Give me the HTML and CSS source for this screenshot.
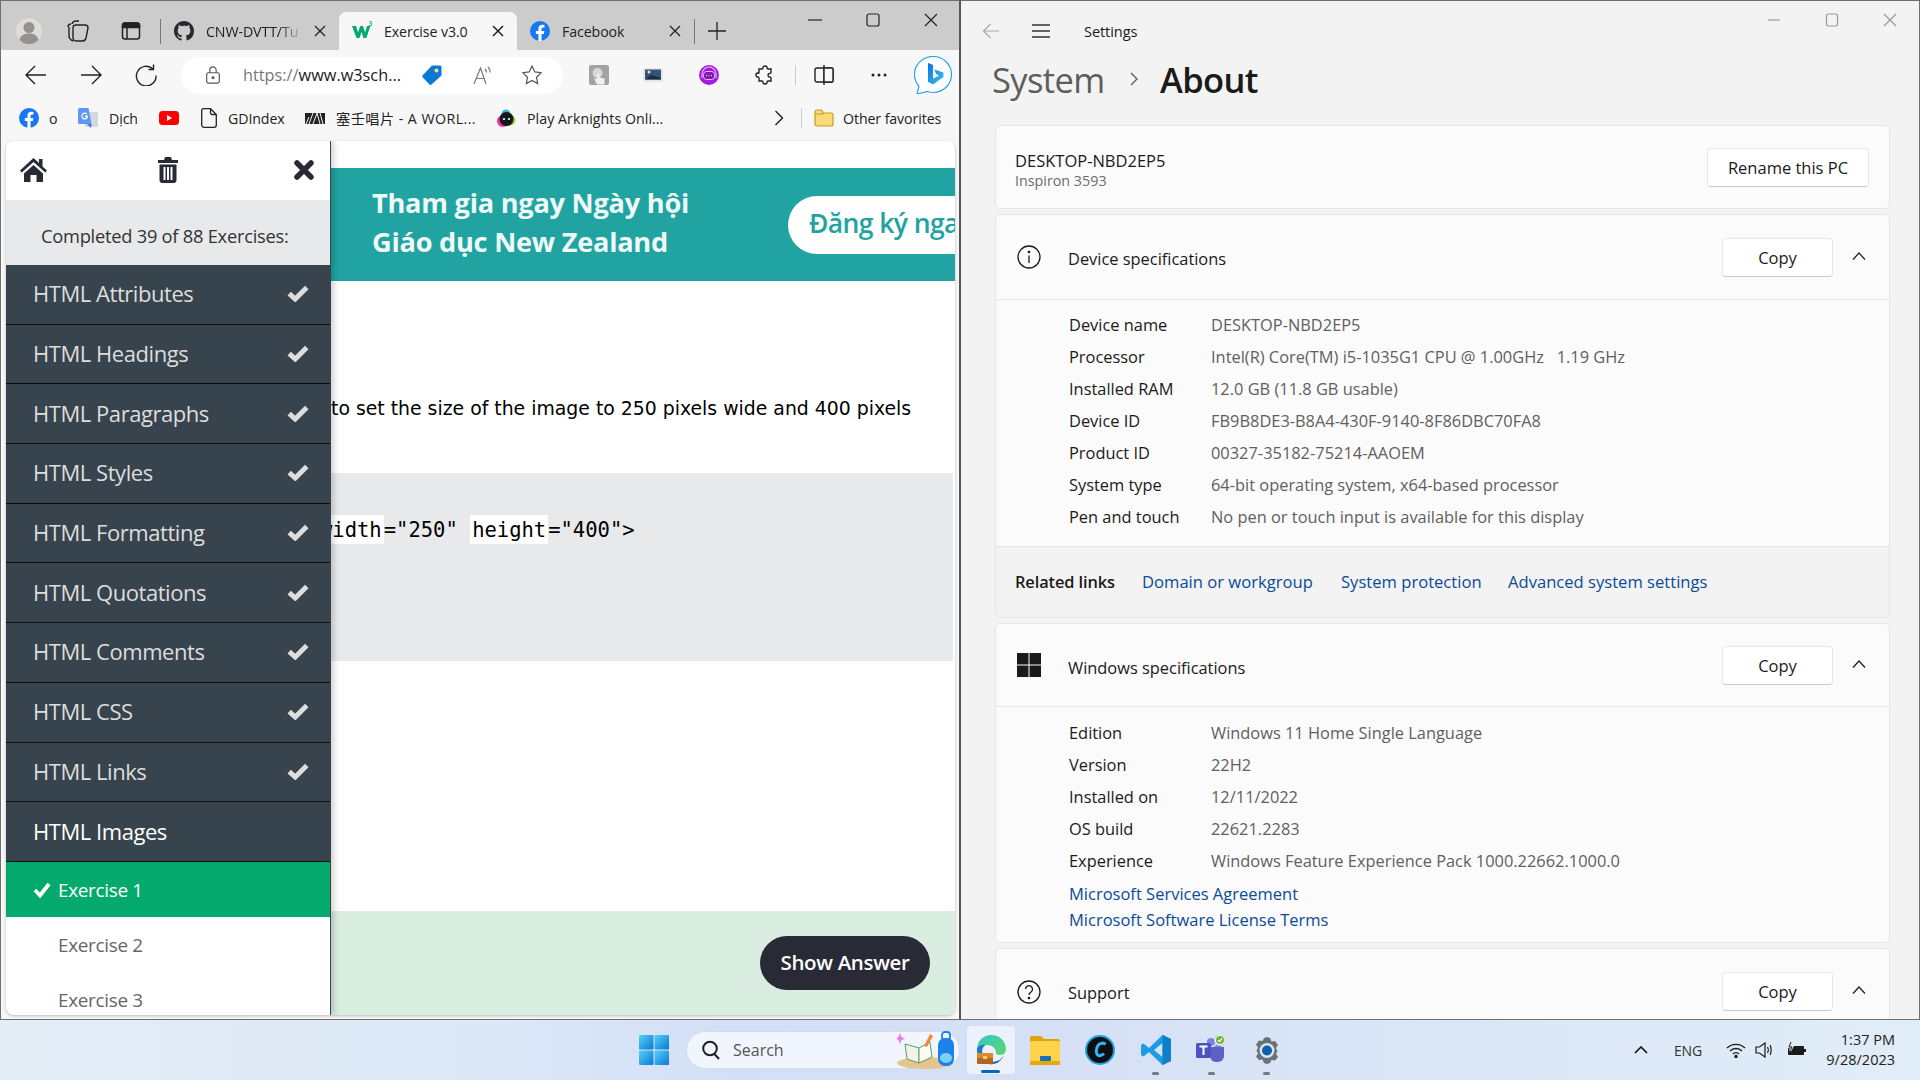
FILE: index.html
```html
<!DOCTYPE html>
<html lang="en">
<head>
<meta charset="utf-8">
<title>Desktop</title>
<link rel="stylesheet" href="styles.css">
</head>
<body>
<div class="desktop">
  <div class="windows">
    <section class="browser">
      <div class="tabstrip">
        <svg class="i26 m16" viewBox="0 0 26 26"><circle cx="13" cy="13" r="13" fill="#dedcd8"/><circle cx="13" cy="9.5" r="5.5" fill="#96918c"/><path d="M3.5 22c1-5 5-6.5 9.500-6.500s8.500 1.500 9.500 6.500a13 13 0 0 1-19 0z" fill="#96918c"/></svg>
        <svg class="i22 m25" viewBox="0 0 22 22" fill="none" stroke="#222" stroke-width="1.400"><path d="M1 7c0-2 1-3 3-3M5 4c.5-2 2-3 4-3h3"/><path d="M2 7v9c0 2 2 4 4 5"/><path d="M6 8c0-2 1-3 3-3h9c2 0 3 1 3 3l-2 10c-.5 2-1.500 3-3.500 3H10c-2 0-4-1-4-3z"/></svg>
        <svg class="i20 m32" viewBox="0 0 20 20" fill="none" stroke="#222" stroke-width="1.500"><rect x="1.500" y="2" width="17" height="16" rx="2.500"/><path d="M6 7v11M1.500 6.500h17"/><path d="M1.500 6V4.500a2.500 2.500 0 0 1 2.500-2.500h12a2.500 2.500 0 0 1 2.500 2.500V6z" fill="#222"/></svg>
        <span class="sep-tab m19"></span>
        <div class="tab">
          <svg class="i20" viewBox="0 0 16 16"><path fill="#24292f" d="M8 0C3.580 0 0 3.580 0 8c0 3.540 2.290 6.530 5.470 7.590.4.070.55-.17.55-.38v-1.340c-2.230.48-2.690-1.070-2.690-1.070-.36-.92-.89-1.170-.89-1.170-.73-.5.050-.49.050-.49.800.06 1.230.83 1.230.83.720 1.220 1.870.87 2.330.66.070-.52.280-.87.510-1.070-1.780-.2-3.640-.89-3.640-3.950 0-.87.310-1.590.820-2.150-.08-.2-.36-1.020.08-2.120 0 0 .67-.21 2.200.82A7.600 7.600 0 0 1 8 3.870c.68 0 1.360.09 2 .27 1.530-1.040 2.200-.82 2.200-.82.44 1.100.16 1.920.08 2.120.51.560.82 1.270.82 2.150 0 3.070-1.870 3.750-3.650 3.950.29.250.54.730.54 1.480v2.200c0 .21.150.46.55.38A8 8 0 0 0 16 8c0-4.420-3.580-8-8-8z"/></svg>
          <span class="tab-title fade">CNW-DVTT/Tu</span>
          <svg class="i12 close" viewBox="0 0 12 12"><path d="M1 1l10 10M11 1L1 11" stroke="#222" stroke-width="1.300"/></svg>
        </div>
        <div class="tab active">
          <svg class="i20 w3" viewBox="0 0 20 20"><path fill="#04aa6d" d="M0 5h4l2 6.500L8.300 5h2.600l2.300 6.500L15 5h3.400l-4 12h-3L9.600 11 7.500 17h-3z"/><text x="16.500" y="4.500" class="sup">3</text></svg>
          <span class="tab-title">Exercise v3.0</span>
          <svg class="i12 close" viewBox="0 0 12 12"><path d="M1 1l10 10M11 1L1 11" stroke="#111" stroke-width="1.400"/></svg>
        </div>
        <div class="tab last">
          <svg class="i20" viewBox="0 0 20 20"><circle cx="10" cy="10" r="10" fill="#1877f2"/><path fill="#fff" d="M13.900 12.900l.45-2.900h-2.800V8.100c0-.8.4-1.600 1.650-1.600h1.250V4.050s-1.150-.2-2.250-.2c-2.300 0-3.800 1.400-3.800 3.900V10H5.850v2.900H8.400V20h3.150v-7.100z"/></svg>
          <span class="tab-title">Facebook</span>
          <svg class="i12 close" viewBox="0 0 12 12"><path d="M1 1l10 10M11 1L1 11" stroke="#222" stroke-width="1.300"/></svg>
        </div>
        <span class="sep-tab"></span>
        <svg class="i18 m13" viewBox="0 0 18 18"><path d="M9 0v18M0 9h18" stroke="#222" stroke-width="1.300"/></svg>
        <div class="winctl">
          <span class="ctl"><svg class="i14" viewBox="0 0 14 14"><path d="M0 7h14" stroke="#222" stroke-width="1.200"/></svg></span>
          <span class="ctl"><svg class="i14" viewBox="0 0 14 14"><rect x="1" y="1" width="12" height="12" rx="2" fill="none" stroke="#222" stroke-width="1.200"/></svg></span>
          <span class="ctl"><svg class="i14" viewBox="0 0 14 14"><path d="M1 1l12 12M13 1L1 13" stroke="#222" stroke-width="1.200"/></svg></span>
        </div>
      </div>

      <div class="toolbar">
        <svg class="i22 t-back" viewBox="0 0 22 22" fill="none" stroke="#222" stroke-width="1.400"><path d="M21 11H1.500M10 2l-9 9 9 9"/></svg>
        <svg class="i22 t-next" viewBox="0 0 22 22" fill="none" stroke="#222" stroke-width="1.400"><path d="M1 11h19.500M12 2l9 9-9 9"/></svg>
        <svg class="i22 t-next" viewBox="0 0 22 22" fill="none" stroke="#222" stroke-width="1.400"><path d="M18 5a9.800 9.800 0 1 0 3 6.500"/><path d="M18.500 .5V5.500H13.500"/></svg>
        <div class="addr">
          <svg class="i18" viewBox="0 0 18 20" fill="none" stroke="#555" stroke-width="1.300"><rect x="2" y="7.500" width="14" height="11.500" rx="2"/><path d="M5.500 7.500V4.500a3.500 3.500 0 0 1 7 0v3"/><circle cx="9" cy="13" r="1" fill="#555"/></svg>
          <span class="url"><span class="url-dim">https://</span>www.w3sch...</span>
          <svg class="i20 a-tag" viewBox="0 0 20 20"><path fill="#0a78d4" d="M10 .5h8a1.500 1.500 0 0 1 1.500 1.500v8.500L9.500 19.500a1.500 1.500 0 0 1-2 0L.7 12.300a1.500 1.500 0 0 1 0-2z"/><circle cx="14.500" cy="5.500" r="2" fill="#f7e27c"/></svg>
          <svg class="i20 a-read" viewBox="0 0 20 20" fill="none" stroke="#777" stroke-width="1.200"><path d="M1 19L7.500 3 13 19M3.500 13.500h8"/><path d="M12 4c1 1 1.500 2 1.500 3.500M15 2c1.500 1.500 2.200 3 2.200 5.500"/></svg>
          <svg class="i20 a-star" viewBox="0 0 20 20" fill="none" stroke="#555" stroke-width="1.200"><path d="M10 1l2.800 5.900 6.400.8-4.700 4.500 1.200 6.400L10 15.500l-5.700 3.100 1.200-6.400L.8 7.700l6.400-.8z"/></svg>
        </div>
        <svg class="i20 e-1" viewBox="0 0 20 20"><rect width="20" height="20" rx="2" fill="#a3a3a3"/><circle cx="8.500" cy="8" r="5" fill="#d8d8d8"/><path d="M8 8.500h2.500v4l5 1v6H8l-3-6h3z" fill="#eef0f2"/></svg>
        <svg class="i20 e-2" viewBox="0 0 20 20"><rect y="3" width="20" height="14" fill="#e4e6ea"/><rect x="2" y="4.500" width="16" height="10" fill="#36537a"/><circle cx="6" cy="7" r="1.500" fill="#ffe08a"/><path d="M2 14.500L8 10l10 3v1.500z" fill="#1d2c44"/></svg>
        <svg class="i20 e-3" viewBox="0 0 20 20"><circle cx="10" cy="10" r="10" fill="#a21ce0"/><path d="M3 13V9a7 7 0 0 1 14 0v4" fill="none" stroke="#e6c0f8" stroke-width="1.100"/><rect x="4.500" y="6.500" width="11" height="8" rx="3" fill="#7c14ad" stroke="#e6c0f8" stroke-width="1"/><path d="M7 10.500h1M9.500 10.500h1M12 10.500h1" stroke="#e6c0f8" stroke-width="1.500"/></svg>
        <svg class="i20 e-4" viewBox="0 0 20 20" fill="none" stroke="#222" stroke-width="1.400"><path d="M8 2.500c0-2 4-2 4 0 0 1 0 1.500 1 1.500h3v3.500c0 1-1 1-1.500 1-2 0-2 3.500 0 3.500.5 0 1.500 0 1.500 1V16h-3c-1 0-1 .5-1 1.500 0 2-4 2-4 0 0-1 0-1.500-1-1.500H4v-3c0-1-.5-1-1.500-1-2 0-2-4 0-4C3.500 8.500 4 8.500 4 7.500V4h3c1 0 1-.5 1-1.500z"/></svg>
        <span class="sep-bar e-5"></span>
        <svg class="i20 e-6" viewBox="0 0 20 20" fill="none" stroke="#222" stroke-width="1.400"><rect x="1" y="3" width="18" height="14" rx="2"/><path d="M10 0v20" /><path d="M10 3h8a1 1 0 0 1 1 1v12a1 1 0 0 1-1 1h-8z" fill="#f7f7f7"/></svg>
        <svg class="i20 e-7" viewBox="0 0 20 20"><circle cx="4" cy="10" r="1.500" fill="#222"/><circle cx="10" cy="10" r="1.500" fill="#222"/><circle cx="16" cy="10" r="1.500" fill="#222"/></svg>
        <svg class="bing" viewBox="0 0 38 38"><defs><linearGradient id="bg" x1="0" y1="0" x2="1" y2="1"><stop offset="0" stop-color="#0f6fe0"/><stop offset="1" stop-color="#35c6f0"/></linearGradient></defs><path d="M19 .5a18.500 18 0 0 1 0 36c-2 0-4-.4-5.500-1L3 38l2-7.500A18 18 0 0 1 19 .5z" fill="#fff" stroke="#29a3e8" stroke-width="1.200"/><path d="M14 7l5 1.800v14l6-3.400-2.800-1.400-1.800-4.500 9 3.100v4.300L19 28.500l-5-2.800z" fill="url(#bg)"/></svg>
      </div>

      <div class="bookmarks">
        <svg class="i20 b-1" viewBox="0 0 20 20"><circle cx="10" cy="10" r="10" fill="#1877f2"/><path fill="#fff" d="M13.900 12.900l.45-2.900h-2.800V8.100c0-.8.4-1.600 1.650-1.600h1.250V4.050s-1.150-.2-2.250-.2c-2.300 0-3.800 1.400-3.800 3.900V10H5.850v2.900H8.400V20h3.150v-7.100z"/></svg>
        <span class="bm b-t1">o</span>
        <svg class="i20 b-2" viewBox="0 0 20 20"><rect x="7" y="4" width="13" height="15" rx="1" fill="#d4d7dc"/><path d="M0 1.500A1.500 1.500 0 0 1 1.500 0h9l3 16H1.500A1.500 1.500 0 0 1 0 14.500z" fill="#5e97f6"/><path d="M9 16l4 4 .5-4z" fill="#3b78e7"/><path d="M10 7.500H7v1.500h1.500c-.3 1-1 1.300-1.700 1.300a2.300 2.300 0 1 1 1.500-4L9.300 5.300a3.600 3.600 0 1 0-2.500 6.300c2.300 0 3.500-1.800 3.200-4.100z" fill="#fff"/></svg>
        <span class="bm b-t2">Dịch</span>
        <svg class="yt b-3" viewBox="0 0 20 14"><rect width="20" height="14" rx="3.500" fill="#f00"/><path d="M8 4l5 3-5 3z" fill="#fff"/></svg>
        <svg class="doc b-4" viewBox="0 0 16 20" fill="none" stroke="#222" stroke-width="1.300"><path d="M2.500 .7h7l5.800 5.800V17a2.300 2.300 0 0 1-2.300 2.300H3A2.300 2.300 0 0 1 .7 17V2.500A1.800 1.800 0 0 1 2.500 .7z"/><path d="M9.500 .7v4.300a1.500 1.500 0 0 0 1.500 1.500h4.300"/></svg>
        <span class="bm b-t4">GDIndex</span>
        <svg class="aw b-5" viewBox="0 0 20 11"><rect width="20" height="11" fill="#222"/><path d="M4 11l4-11M8 11l4-11M12 0l3 11M15 0l3 11M1 11L4 4" stroke="#f7f7f7" stroke-width="1"/></svg>
        <span class="bm b-t5">塞壬唱片 - A WORL...</span>
        <svg class="i20 b-6" viewBox="0 0 20 20"><circle cx="7" cy="13" r="6" fill="#f02fa0"/><circle cx="14" cy="12" r="5.500" fill="#a5d63a"/><circle cx="10" cy="6" r="4.500" fill="#33b7d8"/><circle cx="10.500" cy="11" r="7" fill="#16161d"/><circle cx="8" cy="11" r="1.100" fill="#fff"/><circle cx="13" cy="11" r="1.100" fill="#fff"/></svg>
        <span class="bm b-t6">Play Arknights Onli...</span>
        <svg class="chev" viewBox="0 0 10 16" fill="none" stroke="#222" stroke-width="1.400"><path d="M1.500 1l7 7-7 7"/></svg>
        <span class="sep-bar b-sep"></span>
        <svg class="i20 b-f" viewBox="0 0 20 20"><path d="M1 4a2 2 0 0 1 2-2h4.500l2 3H17a2 2 0 0 1 2 2v9a2 2 0 0 1-2 2H3a2 2 0 0 1-2-2z" fill="#fbd977" stroke="#c59b29" stroke-width="1.200"/><path d="M1 6h7l2-1" fill="none" stroke="#c59b29" stroke-width="1.200"/></svg>
        <span class="bm b-t7">Other favorites</span>
      </div>

      <div class="page">
        <aside class="sidebar">
          <div class="side-head">
            <svg class="home" viewBox="0 0 27 25"><path fill="#282a35" d="M13.500 1L0 13.500l1.800 2L13.500 5l11.700 10.500 1.800-2-4.500-4V2h-3.500v4zM4 16.500V25h6.500v-7h6v7H23v-8.500L13.500 8z"/></svg>
            <svg class="trash" viewBox="0 0 20 26"><path fill="#282a35" d="M7 0h6l1 3h6v3H0V3h6zM1.500 7.500h17V23a3 3 0 0 1-3 3h-11a3 3 0 0 1-3-3zM5.500 10v13h2V10zM9 10v13h2V10zM12.500 10v13h2V10z" fill-rule="evenodd"/></svg>
            <svg class="xmark" viewBox="0 0 20 20"><path d="M3 3l14 14M17 3L3 17" stroke="#282a35" stroke-width="5.500" stroke-linecap="round"/></svg>
          </div>
          <div class="side-count">Completed 39 of 88 Exercises:</div>
          <div class="side-item"><span>HTML Attributes</span><svg class="check" viewBox="0 0 20 16"><path d="M2 8.500l5.500 5L18 3" fill="none" stroke="#ddd" stroke-width="4.500"/></svg></div>
          <div class="side-item"><span>HTML Headings</span><svg class="check" viewBox="0 0 20 16"><path d="M2 8.500l5.500 5L18 3" fill="none" stroke="#ddd" stroke-width="4.500"/></svg></div>
          <div class="side-item"><span>HTML Paragraphs</span><svg class="check" viewBox="0 0 20 16"><path d="M2 8.500l5.500 5L18 3" fill="none" stroke="#ddd" stroke-width="4.500"/></svg></div>
          <div class="side-item"><span>HTML Styles</span><svg class="check" viewBox="0 0 20 16"><path d="M2 8.500l5.500 5L18 3" fill="none" stroke="#ddd" stroke-width="4.500"/></svg></div>
          <div class="side-item"><span>HTML Formatting</span><svg class="check" viewBox="0 0 20 16"><path d="M2 8.500l5.500 5L18 3" fill="none" stroke="#ddd" stroke-width="4.500"/></svg></div>
          <div class="side-item"><span>HTML Quotations</span><svg class="check" viewBox="0 0 20 16"><path d="M2 8.500l5.500 5L18 3" fill="none" stroke="#ddd" stroke-width="4.500"/></svg></div>
          <div class="side-item"><span>HTML Comments</span><svg class="check" viewBox="0 0 20 16"><path d="M2 8.500l5.500 5L18 3" fill="none" stroke="#ddd" stroke-width="4.500"/></svg></div>
          <div class="side-item"><span>HTML CSS</span><svg class="check" viewBox="0 0 20 16"><path d="M2 8.500l5.500 5L18 3" fill="none" stroke="#ddd" stroke-width="4.500"/></svg></div>
          <div class="side-item"><span>HTML Links</span><svg class="check" viewBox="0 0 20 16"><path d="M2 8.500l5.500 5L18 3" fill="none" stroke="#ddd" stroke-width="4.500"/></svg></div>
          <div class="side-item current"><span>HTML Images</span></div>
          <div class="ex done"><svg class="check-sm" viewBox="0 0 18 16"><path d="M2 8l5 5.500L16 2" fill="none" stroke="#fff" stroke-width="3.800"/></svg><span>Exercise 1</span></div>
          <div class="ex"><span>Exercise 2</span></div>
          <div class="ex"><span>Exercise 3</span></div>
        </aside>
        <main class="main">
          <div class="banner">
            <div class="banner-text">Tham gia ngay Ngày hội<br>Giáo dục New Zealand</div>
            <div class="banner-pill">Đăng ký nga</div>
          </div>
          <p class="task">to set the size of the image to 250 pixels wide and 400 pixels</p>
          <div class="codebox"><div class="codeline"><span class="blank">width</span>="250" <span class="blank">height</span>="400"&gt;</div></div>
          <div class="answer"><span class="answer-btn">Show Answer</span></div>
        </main>
      </div>
    </section>

    <section class="settings">
      <div class="set-title">
        <svg class="i18 s-back" viewBox="0 0 18 18" fill="none" stroke="#a8a8a8" stroke-width="1.200"><path d="M17 9H1.500M8.500 2l-7 7 7 7"/></svg>
        <svg class="i18 s-menu" viewBox="0 0 18 18" stroke="#333" stroke-width="1.400"><path d="M0 3h18M0 9h18M0 15h18"/></svg>
        <span class="s-name">Settings</span>
        <div class="winctl light">
          <span class="ctl"><svg class="i14" viewBox="0 0 14 14"><path d="M1 7h12" stroke="#999" stroke-width="1.200"/></svg></span>
          <span class="ctl"><svg class="i14" viewBox="0 0 14 14"><rect x="1.500" y="1" width="11" height="12" rx="1.500" fill="none" stroke="#999" stroke-width="1.200"/></svg></span>
          <span class="ctl"><svg class="i14" viewBox="0 0 14 14"><path d="M1 1l12 12M13 1L1 13" stroke="#999" stroke-width="1.200"/></svg></span>
        </div>
      </div>
      <div class="crumbs">
        <span class="crumb-sys">System</span>
        <svg class="crumb-sep" viewBox="0 0 10 14" fill="none" stroke="#5d5d5d" stroke-width="1.400"><path d="M2 1l6 6-6 6"/></svg>
        <span class="crumb-now">About</span>
      </div>
      <div class="cards">
        <div class="card pc">
          <div class="pc-name"><div class="pc-host">DESKTOP-NBD2EP5</div><div class="pc-model">Inspiron 3593</div></div>
          <span class="btn rename">Rename this PC</span>
        </div>
        <div class="card">
          <div class="card-head">
            <svg class="i24" viewBox="0 0 24 24" fill="none" stroke="#1a1a1a" stroke-width="1.300"><circle cx="12" cy="12" r="11"/><path d="M12 10.500V18"/><circle cx="12" cy="7" r=".7" fill="#1a1a1a"/></svg>
            <span class="head-title">Device specifications</span>
            <span class="btn copy">Copy</span>
            <svg class="caret" viewBox="0 0 14 8" fill="none" stroke="#1a1a1a" stroke-width="1.200"><path d="M1 7.500l6-6.500 6 6.500"/></svg>
          </div>
          <div class="spec dev">
            <div class="row"><span class="k">Device name</span><span class="v">DESKTOP-NBD2EP5</span></div>
            <div class="row"><span class="k">Processor</span><span class="v pre">Intel(R) Core(TM) i5-1035G1 CPU @ 1.00GHz   1.19 GHz</span></div>
            <div class="row"><span class="k">Installed RAM</span><span class="v">12.0 GB (11.8 GB usable)</span></div>
            <div class="row"><span class="k">Device ID</span><span class="v">FB9B8DE3-B8A4-430F-9140-8F86DBC70FA8</span></div>
            <div class="row"><span class="k">Product ID</span><span class="v">00327-35182-75214-AAOEM</span></div>
            <div class="row"><span class="k">System type</span><span class="v">64-bit operating system, x64-based processor</span></div>
            <div class="row"><span class="k">Pen and touch</span><span class="v">No pen or touch input is available for this display</span></div>
          </div>
          <div class="related">
            <span class="rel-label">Related links</span>
            <span class="link rel-1">Domain or workgroup</span>
            <span class="link rel-2">System protection</span>
            <span class="link rel-3">Advanced system settings</span>
          </div>
        </div>
        <div class="card">
          <div class="card-head short">
            <svg class="i24" viewBox="0 0 24 24" fill="#1a1a1a"><rect x="0" y="0" width="11.500" height="11.500"/><rect x="12.500" y="0" width="11.500" height="11.500"/><rect x="0" y="12.500" width="11.500" height="11.500"/><rect x="12.500" y="12.500" width="11.500" height="11.500"/></svg>
            <span class="head-title">Windows specifications</span>
            <span class="btn copy">Copy</span>
            <svg class="caret" viewBox="0 0 14 8" fill="none" stroke="#1a1a1a" stroke-width="1.200"><path d="M1 7.500l6-6.500 6 6.500"/></svg>
          </div>
          <div class="spec win">
            <div class="row"><span class="k">Edition</span><span class="v">Windows 11 Home Single Language</span></div>
            <div class="row"><span class="k">Version</span><span class="v">22H2</span></div>
            <div class="row"><span class="k">Installed on</span><span class="v">12/11/2022</span></div>
            <div class="row"><span class="k">OS build</span><span class="v">22621.2283</span></div>
            <div class="row"><span class="k">Experience</span><span class="v">Windows Feature Experience Pack 1000.22662.1000.0</span></div>
            <div class="lic link">Microsoft Services Agreement</div>
            <div class="lic link">Microsoft Software License Terms</div>
          </div>
        </div>
        <div class="card">
          <div class="card-head plain">
            <svg class="i24" viewBox="0 0 24 24" fill="none" stroke="#1a1a1a" stroke-width="1.300"><circle cx="12" cy="12" r="11"/><path d="M8.500 9a3.500 3.500 0 1 1 5.500 3c-1.300.8-2 1.500-2 3"/><circle cx="12" cy="18" r=".7" fill="#1a1a1a"/></svg>
            <span class="head-title">Support</span>
            <span class="btn copy">Copy</span>
            <svg class="caret" viewBox="0 0 14 8" fill="none" stroke="#1a1a1a" stroke-width="1.200"><path d="M1 7.500l6-6.500 6 6.500"/></svg>
          </div>
        </div>
      </div>
    </section>
  </div>

  <footer class="taskbar">
    <svg class="start" viewBox="0 0 30 30"><defs><linearGradient id="st" x1="0" y1="0" x2="1" y2="1"><stop offset="0" stop-color="#52d2fa"/><stop offset="1" stop-color="#0b78d1"/></linearGradient></defs><rect width="14.500" height="14.500" rx="1" fill="url(#st)"/><rect x="15.500" width="14.500" height="14.500" rx="1" fill="url(#st)"/><rect y="15.500" width="14.500" height="14.500" rx="1" fill="url(#st)"/><rect x="15.500" y="15.500" width="14.500" height="14.500" rx="1" fill="url(#st)"/></svg>
    <div class="search">
      <svg class="i20" viewBox="0 0 20 20" fill="none" stroke="#1f1f1f" stroke-width="2"><circle cx="9" cy="8.500" r="6.800"/><path d="M13.500 14l4.500 5"/></svg>
      <span class="search-text">Search</span>
      <svg class="search-art" viewBox="0 0 60 40"><ellipse cx="28" cy="33" rx="28" ry="6" fill="#e6c48e"/><path d="M8 14l14 4 0 15-12-4z" fill="#f1f3ea" stroke="#5c9c68" stroke-width="1"/><path d="M22 18l11-6 2 15-13 6z" fill="#fbfbf2" stroke="#5c9c68" stroke-width="1"/><path d="M27 16l6-12 3 2-6 11z" fill="#f08a3c"/><path d="M3 3l1.500 4 4 1.500-4 1.500L3 14 1.500 10-2 8.500 1.500 7z" fill="#e97ae6"/><rect x="41" y="8" width="16" height="28" rx="7" fill="#1a82ea"/><rect x="45" y="2" width="8" height="8" rx="3" fill="none" stroke="#1a82ea" stroke-width="1.800"/><ellipse cx="49" cy="28" rx="6" ry="5" fill="#7ed0f9"/></svg>
    </div>
    <div class="tb-cell edge">
      <svg class="i30" viewBox="0 0 30 30"><defs><linearGradient id="eg" x1="0" y1="0" x2="1" y2="1"><stop offset="0" stop-color="#36c6c9"/><stop offset="1" stop-color="#5bd96a"/></linearGradient></defs><path d="M1 13C2 5 8 0 15 0c8 0 15 6 15 14 0 3-2 6-6 6-3 0-4-1-4-2 0-4-3-8-9-8-5 0-9 1-10 3z" fill="url(#eg)"/><path d="M1 13c2-3 6-4 9-3-3 1-5 5-3 10 1 3 4 6 8 7-8 2-15-5-14-14z" fill="#1b77d3"/><path d="M15 27c6 0 10-2 13-7-3 7-9 10-15 9z" fill="#1460b0"/><rect x="1" y="18" width="16" height="11" rx="1" fill="#b5651d"/><rect x="1" y="18" width="16" height="5" fill="#d98a2b"/><rect x="7" y="21" width="4" height="3" fill="#ffd27a"/></svg>
      <span class="ind-active"></span>
    </div>
    <div class="tb-cell folder">
      <svg class="i30" viewBox="0 0 30 30"><path d="M0 3a2 2 0 0 1 2-2h9l3 3h14a2 2 0 0 1 2 2v4H0z" fill="#e0a10c"/><rect y="6" width="30" height="24" rx="1" fill="#fcd34a"/><rect x="10" y="21" width="11" height="5" rx="1" fill="#1572b8"/><path d="M0 26h30v3a1 1 0 0 1-1 1H1a1 1 0 0 1-1-1z" fill="#e7a60a"/></svg>
    </div>
    <div class="tb-cell">
      <svg class="i30" viewBox="0 0 30 30"><circle cx="15" cy="15" r="15" fill="#1aa3e0"/><circle cx="15" cy="15" r="13" fill="#0d0d12"/><path d="M20.500 9.500c-2-2.500-7-1.500-8.500 3s-.5 9 3.500 8c1.500-.3 2.500-1 3.500-2" fill="none" stroke="#2bb8f2" stroke-width="3"/></svg>
    </div>
    <div class="tb-cell">
      <svg class="i30" viewBox="0 0 30 30"><path d="M21.500 0L30 4v22l-8.500 4L8 17l-5.500 4.500L0 20v-10l2.500-1.500L8 13zM21.500 8L13 15l8.500 7z" fill="#1d9ce5" fill-rule="evenodd"/><path d="M21.500 0L30 4v22l-8.500 4z" fill="#0f7fc9"/></svg>
      <span class="ind"></span>
    </div>
    <div class="tb-cell">
      <svg class="i30" viewBox="0 0 30 30"><circle cx="22" cy="13" r="3.500" fill="#7b83eb"/><path d="M14 12h14v9a6 6 0 0 1-6 6h-2a6 6 0 0 1-6-6z" fill="#5b62c4"/><circle cx="15" cy="7" r="4" fill="#7b83eb"/><rect y="8" width="15" height="15" rx="1.500" fill="#4b53bc"/><path d="M3.500 11.500h8M7.500 11.500V20" stroke="#fff" stroke-width="2"/><circle cx="24" cy="5" r="5.500" fill="#fff" stroke="#c4cdb8" stroke-width="1"/><circle cx="24" cy="5" r="4" fill="#6cb33f"/><path d="M22 5l1.500 1.500L26 3.500" fill="none" stroke="#fff" stroke-width="1.200"/></svg>
      <span class="ind"></span>
    </div>
    <div class="tb-cell">
      <svg class="i30" viewBox="0 0 30 30"><path d="M15 2l3 1 1.500 3.500 3.500-.5 3 4-2 3 1.500 3-1.500 3 2 3-3 3.500-3.500-.5L18 28l-3 1-3-1-1.500-3.500L7 25l-3-3.500 2-3-1.500-3 1.500-3-2-3 3-4 3.500.5L12 3z" fill="#6b7178"/><circle cx="15" cy="15.500" r="7.500" fill="#dbe3ee"/><circle cx="15" cy="15.500" r="5" fill="#0f5fb0"/></svg>
      <span class="ind"></span>
    </div>
    <div class="tray">
      <svg class="tray-caret" viewBox="0 0 14 8" fill="none" stroke="#111" stroke-width="1.600"><path d="M1 7l6-6 6 6"/></svg>
      <span class="eng">ENG</span>
      <svg class="tray-wifi" viewBox="0 0 20 16" fill="none" stroke="#1a1a1a" stroke-width="1.300"><path d="M1 6a13 13 0 0 1 18 0M4 9a8.500 8.500 0 0 1 12 0M7 12a4 4 0 0 1 6 0"/><circle cx="10" cy="14.500" r="1" fill="#1a1a1a"/></svg>
      <svg class="tray-vol" viewBox="0 0 20 16" fill="none" stroke="#1a1a1a" stroke-width="1.200"><path d="M1 5h3.500L10 1v14l-5.500-4H1z"/><path d="M12.500 5c1 1.500 1 4.500 0 6M15 3c1.500 2.500 1.500 7.500 0 10"/></svg>
      <svg class="tray-bat" viewBox="0 0 20 16"><path d="M3 4h14a1 1 0 0 1 1 1v7a1 1 0 0 1-1 1H3a1 1 0 0 1-1-1V5a1 1 0 0 1 1-1z" fill="#1a1a1a"/><rect x="18" y="7" width="2" height="3" fill="#1a1a1a"/><path d="M5 0L3 5h3L4 9" fill="none" stroke="#e4ecf6" stroke-width="2.500"/><path d="M5 0L3 5h3L4 9" fill="none" stroke="#1a1a1a" stroke-width="1"/></svg>
      <div class="clock"><div>1:37 PM</div><div>9/28/2023</div></div>
    </div>
  </footer>
</div>
</body>
</html>
```

FILE: styles.css
```css
* { box-sizing: border-box; }
html, body { margin: 0; height: 100%; }
body { font-family: "Open Sans", "Noto Sans CJK SC", sans-serif; overflow: hidden; color: #1a1a1a; }
svg { display: block; flex: none; }
.desktop { width: 1920px; height: 1080px; display: flex; flex-direction: column; }
.windows { height: 1020px; display: flex; }

.i12 { width: 12px; height: 12px; }
.i14 { width: 14px; height: 14px; }
.i18 { width: 18px; height: 18px; }
.i20 { width: 20px; height: 20px; }
.i22 { width: 22px; height: 22px; }
.i24 { width: 24px; height: 24px; }
.i26 { width: 26px; height: 26px; }
.i30 { width: 30px; height: 30px; }

/* browser */
.browser { width: 961px; flex: none; display: flex; flex-direction: column; background: #f7f7f7; border: 1px solid #6f6f6f; border-right-width: 2px; border-right-color: #555; }
.tabstrip { height: 49px; flex: none; padding-top: 11px; background: #ccc; display: flex; align-items: center; }
.m13 { margin-left: 13px; }
.m16 { margin-left: 15px; }
.m19 { margin-left: 19px; }
.m25 { margin-left: 25px; }
.m32 { margin-left: 32px; }
.sep-tab { width: 1px; height: 25px; background: #777; flex: none; }
.tab { width: 178px; height: 38px; flex: none; padding: 0 13px; display: flex; align-items: center; font-size: 14.200px; letter-spacing: -.1px; color: #222; }
.tab.active { background: #f7f7f7; border-radius: 7px 7px 0 0; }
.tab.last { width: 177px; }
.tab-title { margin-left: 12px; white-space: nowrap; overflow: hidden; }
.fade { width: 97px; -webkit-mask-image: linear-gradient(90deg, #000 75%, transparent); mask-image: linear-gradient(90deg, #000 75%, transparent); }
.close { margin-left: auto; }
.w3 { overflow: visible; }
.sup { font-size: 6.500px; font-weight: 600; fill: #04aa6d; }
.winctl { margin-left: auto; margin-right: -1px; align-self: flex-start; display: flex; }
.ctl { width: 58px; height: 16px; display: flex; align-items: center; justify-content: center; }

.toolbar { height: 50px; flex: none; display: flex; align-items: center; }
.t-back { margin-left: 24px; }
.t-next { margin-left: 33px; }
.addr { width: 382px; height: 37px; margin-left: 24px; padding-left: 23px; border-radius: 19px; background: #fff; display: flex; align-items: center; flex: none; }
.url { width: 158px; margin-left: 21px; font-size: 16.300px; color: #1a1a1a; white-space: nowrap; }
.url-dim { color: #777; }
.a-tag { margin-left: 21px; }
.a-read { margin-left: 31px; }
.a-star { margin-left: 29px; }
.e-1 { margin-left: 26px; }
.e-2 { margin-left: 34px; }
.e-3 { margin-left: 36px; }
.e-4 { margin-left: 36px; }
.sep-bar { width: 1px; height: 20px; background: #ccc; flex: none; }
.e-5 { margin-left: 20px; height: 20px; }
.e-6 { margin-left: 18px; }
.e-7 { margin-left: 35px; }
.bing { width: 38px; height: 38px; margin-left: 25px; }

.bookmarks { height: 40px; flex: none; padding-bottom: 4px; display: flex; align-items: center; }
.bm { font-size: 14.200px; letter-spacing: -.1px; color: #222; white-space: nowrap; flex: none; overflow: hidden; }
.b-1 { margin-left: 18px; }
.b-t1 { margin-left: 10px; width: 8px; }
.b-2 { margin-left: 21px; }
.b-t2 { margin-left: 11px; width: 28px; }
.yt { width: 20px; height: 14px; }
.b-3 { margin-left: 22px; }
.doc { width: 16px; height: 20px; }
.b-4 { margin-left: 22px; }
.b-t4 { margin-left: 11px; width: 57px; }
.aw { width: 20px; height: 11px; }
.b-5 { margin-left: 20px; }
.b-t5 { margin-left: 11px; width: 140px; letter-spacing: .45px; }
.b-6 { margin-left: 20px; }
.b-t6 { margin-left: 11px; width: 140px; letter-spacing: .05px; }
.chev { width: 10px; height: 16px; margin-left: auto; }
.b-sep { margin-left: 17px; }
.b-f { margin-left: 12px; }
.b-t7 { margin-left: 9px; width: 100px; margin-right: 16px; }

.page { flex: 1; min-height: 0; margin: 1px 4px 4px 5px; display: flex; background: #fff; border-radius: 8px; overflow: hidden; box-shadow: 0 1px 3px rgba(0,0,0,.25); }
.sidebar { width: 325px; flex: none; position: relative; z-index: 1; background: #fff; overflow: hidden; box-shadow: 3px 0 6px rgba(0,0,0,.18); border-right: 1px solid #38444d; }
.side-head { height: 59px; padding: 0 16px 2px; display: flex; align-items: center; justify-content: space-between; }
.home { width: 27px; height: 25px; margin-left: -2px; }
.trash { width: 20px; height: 26px; margin-left: -6px; }
.xmark { width: 20px; height: 20px; margin-right: 0; }
.side-count { height: 65px; background: #e7e9eb; display: flex; align-items: center; padding: 6px 0 0 35px; font-size: 18.300px; letter-spacing: -.25px; color: #333; margin-right: -1px; }
.side-item { height: 59.700px; margin-right: -1px; padding: 0 23px 2px 27px; background: #38444d; border-bottom: 1px solid #0c0c0c; display: flex; align-items: center; justify-content: space-between; color: #ddd; font-size: 22px; letter-spacing: -.45px; }
.side-item.current { color: #fff; }
.check { width: 22px; height: 18px; margin-right: -1px; }
.check-sm { width: 18px; height: 16px; margin-right: 7px; margin-left: -25px; }
.ex { height: 55px; padding: 2px 0 0 52px; display: flex; align-items: center; font-size: 18.900px; letter-spacing: -.3px; color: #666; }
.ex.done { background: #04aa6d; color: #fff; margin-right: -1px; }

.main { flex: 1; min-width: 0; overflow: hidden; display: flex; flex-direction: column; padding-top: 27px; }
.banner { height: 113px; flex: none; background: #21a4a1; display: flex; align-items: center; overflow: hidden; }
.banner-text { width: 317px; flex: none; margin-left: 41px; padding-bottom: 5px; font-size: 27.200px; line-height: 39px; font-weight: 700; letter-spacing: -.25px; color: #eef9f8; white-space: nowrap; }
.banner-pill { height: 58px; width: 200px; flex: none; margin-left: 99px; padding-left: 21px; border-radius: 29px 0 0 29px; background: #fff; color: #21a4a1; font-size: 26.500px; font-weight: 600; letter-spacing: -.6px; line-height: 54px; white-space: nowrap; }
.task { margin: 114px 0 0; height: 26px; line-height: 28px; font-family: "DejaVu Sans", sans-serif; font-size: 18.850px; color: #000; white-space: nowrap; }
.codebox { height: 188px; flex: none; margin: 52px 2px 0 0; padding-top: 42px; background: #e7e9eb; }
.codeline { margin-left: -13px; height: 29px; line-height: 30px; font-family: "DejaVu Sans Mono", monospace; font-size: 20.500px; color: #000; white-space: pre; }
.blank { display: inline-block; height: 29px; padding: 0 2px; background: #fff; }
.answer { margin-top: auto; height: 104px; flex: none; background: #d9ede1; padding: 25px 25px 0 0; display: flex; justify-content: flex-end; align-items: flex-start; }
.answer-btn { width: 170px; height: 54px; padding-bottom: 2px; border-radius: 27px; background: #282a35; color: #fff; display: flex; align-items: center; justify-content: center; font-size: 20.500px; font-weight: 600; letter-spacing: -.35px; }

/* settings */
.settings { flex: 1; min-width: 0; background: #f3f3f3; border: 1px solid #6f6f6f; border-left: 0; display: flex; flex-direction: column; overflow: hidden; }
.set-title { height: 50px; flex: none; padding: 10px 0 0; display: flex; align-items: center; }
.s-back { margin-left: 21px; }
.s-menu { margin-left: 32px; }
.s-name { margin-left: 34px; font-size: 14.600px; letter-spacing: -.1px; color: #1a1a1a; }
.winctl.light { margin-right: 0; margin-top: 1px; }
.crumbs { height: 60px; flex: none; padding: 0 0 4px 31px; display: flex; align-items: center; }
.crumb-sys { font-size: 34.500px; font-weight: 500; color: #5d5d5d; letter-spacing: -.6px; width: 113px; white-space: nowrap; }
.crumb-sep { width: 10px; height: 14px; margin-left: 24px; }
.crumb-now { margin-left: 21px; font-size: 34.500px; font-weight: 600; letter-spacing: -.6px; color: #1a1a1a; }
.cards { margin-top: 14px; padding: 0 29px 0 34px; display: flex; flex-direction: column; gap: 5px; }
.card { flex: none; background: #fbfbfb; border: 1px solid #e5e5e5; border-radius: 5px; overflow: hidden; }
.card.pc { height: 84px; padding: 0 20px 0 19px; display: flex; align-items: center; justify-content: space-between; }
.pc-name { margin-top: 6px; }
.pc-host { font-size: 16.500px; line-height: 21px; color: #1a1a1a; }
.pc-model { font-size: 14.300px; line-height: 20px; color: #6b6b6b; }
.btn { display: flex; align-items: center; justify-content: center; background: #fff; border: 1px solid #e6e6e6; border-bottom-color: #c9c9c9; border-radius: 4px; font-size: 16.500px; color: #1a1a1a; flex: none; }
.rename { width: 162px; height: 39px; margin-top: 1px; }
.copy { width: 111px; height: 39px; margin-left: auto; }
.card-head { height: 85px; padding: 0 23px 0 21px; display: flex; align-items: center; border-bottom: 1px solid #e5e5e5; }
.card-head.short { height: 83px; }
.card-head.plain { border-bottom: 0; }
.head-title { margin-left: 27px; margin-top: 3px; font-size: 16.400px; color: #1a1a1a; }
.short .head-title { margin-top: 5px; }
.plain .head-title { margin-top: 2px; }
.caret { width: 14px; height: 8px; margin-left: 19px; margin-top: -3px; }
.spec { padding: 8px 0 14px 73px; }
.spec.win { padding: 9px 0 9px 73px; }
.row { height: 32px; display: flex; align-items: center; font-size: 16.400px; white-space: nowrap; }
.k { width: 142px; color: #1a1a1a; flex: none; }
.v { color: #5f5f5f; }
.pre { white-space: pre; }
.related { height: 71px; padding: 0 0 2px 19px; background: #f3f3f3; border-top: 1px solid #e5e5e5; display: flex; align-items: center; font-size: 16.600px; white-space: nowrap; }
.rel-label { width: 101px; font-weight: 600; font-size: 16.400px; letter-spacing: -.1px; color: #1a1a1a; }
.link { color: #0a4a9a; }
.rel-1 { margin-left: 26px; width: 171px; }
.rel-2 { margin-left: 28px; width: 140px; }
.rel-3 { margin-left: 27px; }
.lic { height: 26px; line-height: 26px; font-size: 16.500px; }
.row + .lic { margin-top: 5px; }

/* taskbar */
.taskbar { height: 60px; flex: none; padding-left: 639px; display: flex; align-items: center; background: linear-gradient(90deg, #e3edf6 0%, #dde8f7 25%, #d3dff6 38%, #d5e0f6 55%, #dbe7f6 75%, #e0ecf7 100%); }
.start { width: 30px; height: 30px; }
.search { width: 274px; height: 38px; margin-left: 17px; padding-left: 14px; border-radius: 19px; background: #f1f5fd; border: 1px solid #d4dcea; display: flex; align-items: center; }
.search-text { margin-left: 12px; font-size: 16px; color: #555; }
.search-art { width: 60px; height: 40px; margin-left: auto; margin-right: 2px; }
.tb-cell { width: 55.500px; height: 48px; flex: none; display: flex; align-items: center; justify-content: center; position: relative; }
.tb-cell.edge { width: 48px; margin-left: 7px; background: rgba(255,255,255,.55); border-radius: 4px; }
.tb-cell.folder { margin-left: 2px; }
.ind-active { position: absolute; left: 14px; bottom: 1px; width: 19px; height: 3px; border-radius: 2px; background: #0067c0; }
.ind { position: absolute; left: 24px; bottom: -1px; width: 7px; height: 3px; border-radius: 2px; background: #777; }
.tray { margin-left: auto; padding-right: 25px; display: flex; align-items: center; }
.tray-caret { width: 14px; height: 8px; }
.eng { margin-left: 26px; font-size: 14px; letter-spacing: -.2px; color: #333; width: 29px; white-space: nowrap; }
.tray-wifi { width: 20px; height: 16px; margin-left: 23px; }
.tray-vol { width: 20px; height: 16px; margin-left: 9px; }
.tray-bat { width: 20px; height: 16px; margin-left: 11px; }
.clock { margin-left: 14px; text-align: right; font-size: 14.500px; line-height: 20px; color: #222; width: 75px; white-space: nowrap; }
```
